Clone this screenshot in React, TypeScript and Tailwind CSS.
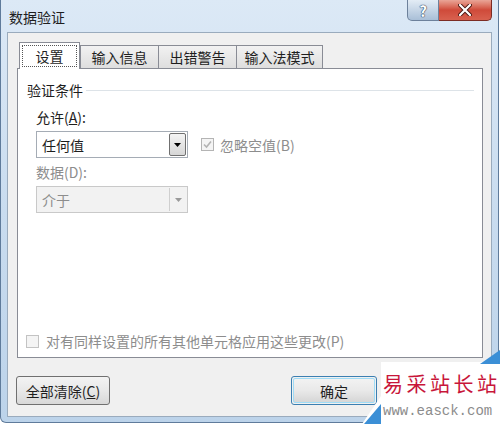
import React from "react";

function Tri({ color }: { color: string }) {
  return (
    <svg width="7" height="4" viewBox="0 0 7 4">
      <path d="M0 0 H7 L3.5 4 Z" fill={color} />
    </svg>
  );
}

export default function App() {
  return (
    <div className="relative w-[500px] h-[424px] overflow-hidden bg-white font-['Noto_Sans_CJK_SC','Noto_Sans',sans-serif] text-[14px] leading-[20px] text-[#1e1e1e]">
      <div className="w-[499px] h-[423px] flex flex-col border-l border-r border-b border-[#5f7b9b] rounded-b-[6px] bg-gradient-to-b from-[#dce9f6] via-[#c9dcef] to-[#bcd3ea] px-[6px] pb-[5px]">
        {/* title bar */}
        <div className="h-[32px] flex items-start shrink-0">
          <span className="pt-[7px] pl-[2px] text-[14px] text-[#1e1e1e]">数据验证</span>
          <div className="ml-auto flex">
            <div className="w-[32px] h-[21px] flex items-center justify-center rounded-bl-[5px] border border-t-0 border-[#6d819b] bg-gradient-to-b from-[#e3ecf5] to-[#a9bfd7]">
              <span className="text-[15px] font-bold leading-none text-white [text-shadow:0_0_1px_#2f4560,0_0_1px_#2f4560,0_0_1px_#2f4560]">?</span>
            </div>
            <div className="w-[53px] h-[21px] flex items-center justify-center rounded-br-[5px] border border-t-0 border-l-0 border-[#7c2c24] bg-gradient-to-b from-[#e9a597] via-[#cf4a3a] to-[#d8614f]">
              <svg width="14" height="12" viewBox="0 0 14 12">
                <path d="M2 1 L12 11 M12 1 L2 11" stroke="#4b1a14" strokeWidth="4" strokeLinecap="round" />
                <path d="M2 1 L12 11 M12 1 L2 11" stroke="#ffffff" strokeWidth="2.2" strokeLinecap="round" />
              </svg>
            </div>
          </div>
        </div>

        {/* client area */}
        <div className="flex-1 flex flex-col bg-[#f0f0f0] border border-[#9aabbd] pl-[9px] pr-[8px] pt-[9px]">
          {/* tabs */}
          <div className="h-[26px] flex items-end pl-[2px] shrink-0">
            <div className="relative z-10 -mb-px w-[61px] h-[27px] bg-white border border-b-0 border-[#898c95] p-[2px] pt-[2px]">
              <div className="h-full border border-dotted border-[#555] flex items-center justify-center">设置</div>
            </div>
            <div className="w-[79px] h-[23px] flex items-center justify-center border border-b-0 border-[#898c95] bg-gradient-to-b from-[#f2f2f2] to-[#dedede]">输入信息</div>
            <div className="-ml-px w-[79px] h-[23px] flex items-center justify-center border border-b-0 border-[#898c95] bg-gradient-to-b from-[#f2f2f2] to-[#dedede]">出错警告</div>
            <div className="-ml-px w-[87px] h-[23px] flex items-center justify-center border border-b-0 border-[#898c95] bg-gradient-to-b from-[#f2f2f2] to-[#dedede]">输入法模式</div>
          </div>

          {/* panel */}
          <div className="h-[290px] shrink-0 bg-white border border-[#898c95] flex flex-col">
            <div className="mt-[11px] h-[20px] flex items-center pl-[9px] pr-[8px]">
              <span>验证条件</span>
              <div className="flex-1 ml-[3px] h-px bg-[#dde3e8]" />
            </div>

            <div className="pl-[18px] flex flex-col">
              <div className="mt-[7px] h-[20px]">
                允许(<span className="underline">A</span>):
              </div>
              <div className="mt-[4px] flex items-center">
                <div className="w-[152px] h-[27px] flex items-center border border-[#a5acb5] bg-white p-px">
                  <span className="pl-[4px] flex-1">任何值</span>
                  <div className="w-[17px] h-full flex items-center justify-center border border-[#707070] rounded-[2px] bg-gradient-to-b from-[#f4f4f4] to-[#d6d6d6]">
                    <Tri color="#000000" />
                  </div>
                </div>
                <div className="ml-[13px] w-[13px] h-[13px] border border-[#b4b4b4] bg-[#f4f4f4] flex items-center justify-center">
                  <svg width="9" height="9" viewBox="0 0 9 9">
                    <path d="M1 4.5 L3.5 7 L8 1.5" stroke="#b3b3b3" strokeWidth="1.6" fill="none" />
                  </svg>
                </div>
                <span className="ml-[6px] text-[#8d8d8d]">忽略空值(B)</span>
              </div>

              <div className="mt-[4px] h-[20px] text-[#8d8d8d]">数据(D):</div>
              <div className="mt-[4px] w-[152px] h-[27px] flex items-center border border-[#c9c9c9] bg-[#f2f2f2] p-px">
                <span className="pl-[4px] flex-1 text-[#8d8d8d]">介于</span>
                <div className="w-[17px] h-full flex items-center justify-center border-l border-[#cfcfcf]">
                  <Tri color="#9a9a9a" />
                </div>
              </div>
            </div>

            <div className="mt-auto mb-[6px] h-[20px] flex items-center pl-[8px]">
              <div className="w-[13px] h-[13px] border border-[#c3c3c3] bg-[#f4f4f4]" />
              <span className="ml-[7px] text-[#8d8d8d]">对有同样设置的所有其他单元格应用这些更改(P)</span>
            </div>
          </div>

          {/* buttons */}
          <div className="mt-[18px] flex shrink-0">
            <div className="-ml-px w-[94px] h-[29px] flex items-center justify-center rounded-[3px] border border-[#707070] bg-gradient-to-b from-[#f3f3f3] via-[#e8e8e8] to-[#d8d8d8]">
              全部清除(<span className="underline">C</span>)
            </div>
            <div className="ml-[181px] w-[86px] h-[29px] rounded-[3px] border border-[#3c7fb1] p-px">
              <div className="h-full flex items-center justify-center rounded-[2px] border border-[#9fdcf6] bg-gradient-to-b from-[#f2f2f2] via-[#e9e9e9] to-[#d6d6d6]">
                确定
              </div>
            </div>
          </div>
        </div>
      </div>

      {/* watermark overlay */}
      <div className="absolute left-[356px] top-[348px] w-[144px] h-[76px]">
        <svg width="144" height="76" viewBox="0 0 144 76" className="absolute inset-0">
          <polygon points="25,14 144,14 144,76 6,76 25,48" fill="#ffffff" />
          <polygon points="8,76 25,56 25,76" fill="#3b8fd6" />
          <polygon points="124,16 144,2 144,16" fill="#3b8fd6" />
        </svg>
        <div className="absolute left-[27px] top-[23px] text-[20px] leading-[26px] tracking-[3.5px] text-[#c8163a] font-['Noto_Sans_CJK_SC',serif] whitespace-nowrap">
          易采站长站
        </div>
        <div className="absolute left-[27px] top-[55px] text-[14px] leading-[16px] text-[#8c8c8c] font-['Liberation_Mono',monospace] whitespace-nowrap">
          www.easck.com
        </div>
      </div>
    </div>
  );
}
